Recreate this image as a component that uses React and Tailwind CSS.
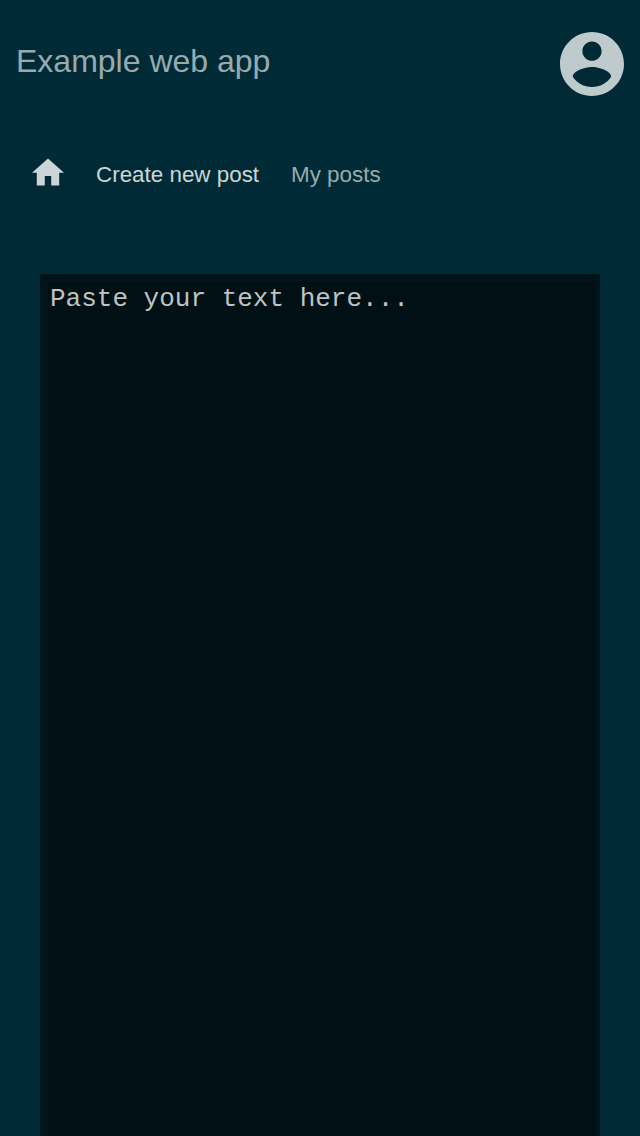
import React from "react";

function AccountIcon() {
  return (
    <svg viewBox="2 2 20 20" className="size-16 fill-[#bfcacd]" aria-hidden="true">
      <path d="M12 2C6.48 2 2 6.48 2 12s4.48 10 10 10 10-4.48 10-10S17.52 2 12 2zm0 3c1.66 0 3 1.34 3 3s-1.34 3-3 3-3-1.34-3-3 1.34-3 3-3zm0 14.2c-2.5 0-4.71-1.28-6-3.22.03-1.99 4-3.08 6-3.08 1.99 0 5.97 1.09 6 3.08-1.29 1.94-3.5 3.22-6 3.22z" />
    </svg>
  );
}

function HomeIcon() {
  return (
    <svg viewBox="2 2.75 20 17.5" className="h-7 w-8 fill-[#ccd5d7]" aria-hidden="true">
      <path d="M10 20v-6h4v6h5v-8h3L12 3 2 12h3v8z" />
    </svg>
  );
}

export default function App() {
  return (
    <div className="flex h-[1136px] flex-col overflow-hidden bg-[#002b36] font-['Liberation_Sans',sans-serif]">
      <header className="flex h-32 shrink-0 items-center justify-between px-4">
        <h1 className="pb-1.5 text-[32px] leading-10 text-[#99aaaf]">Example web app</h1>
        <AccountIcon />
      </header>
      <nav className="flex h-[94px] shrink-0 items-center gap-8 px-8 text-[22.4px]">
        <a className="pb-1.5"><HomeIcon /></a>
        <a className="text-[#ccd5d7]">Create new post</a>
        <a className="text-[#99aaaf]">My posts</a>
      </nav>
      <main className="flex min-h-0 flex-1 px-10 pt-[52px]">
        <textarea
          className="w-full resize-none border-8 border-r-4 border-b-0 border-[#001419] bg-[#001014] px-0.5 py-0.5 font-['Liberation_Mono',monospace] text-[26px] leading-[30px] text-[#bfc3c4] outline-none placeholder:text-[#bfc3c4]"
          placeholder="Paste your text here..."
        />
      </main>
    </div>
  );
}
